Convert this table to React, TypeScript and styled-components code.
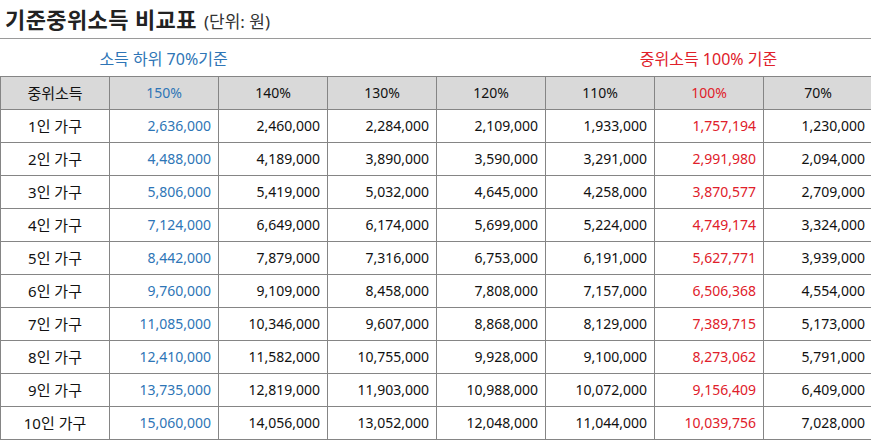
import React from 'react';
import styled, { createGlobalStyle } from 'styled-components';

const GlobalStyle = createGlobalStyle`
  body {
    margin: 0;
    background: #ffffff;
    font-family: 'Noto Sans', 'Noto Sans CJK KR', sans-serif;
    color: #111111;
  }
`;

type Tone = 'blue' | 'red' | 'plain';

const COLS = ['150%', '140%', '130%', '120%', '110%', '100%', '70%'];
const TONES: Tone[] = ['blue', 'plain', 'plain', 'plain', 'plain', 'red', 'plain'];

const ROWS: { label: string; values: string[] }[] = [
  { label: '1인 가구', values: ['2,636,000', '2,460,000', '2,284,000', '2,109,000', '1,933,000', '1,757,194', '1,230,000'] },
  { label: '2인 가구', values: ['4,488,000', '4,189,000', '3,890,000', '3,590,000', '3,291,000', '2,991,980', '2,094,000'] },
  { label: '3인 가구', values: ['5,806,000', '5,419,000', '5,032,000', '4,645,000', '4,258,000', '3,870,577', '2,709,000'] },
  { label: '4인 가구', values: ['7,124,000', '6,649,000', '6,174,000', '5,699,000', '5,224,000', '4,749,174', '3,324,000'] },
  { label: '5인 가구', values: ['8,442,000', '7,879,000', '7,316,000', '6,753,000', '6,191,000', '5,627,771', '3,939,000'] },
  { label: '6인 가구', values: ['9,760,000', '9,109,000', '8,458,000', '7,808,000', '7,157,000', '6,506,368', '4,554,000'] },
  { label: '7인 가구', values: ['11,085,000', '10,346,000', '9,607,000', '8,868,000', '8,129,000', '7,389,715', '5,173,000'] },
  { label: '8인 가구', values: ['12,410,000', '11,582,000', '10,755,000', '9,928,000', '9,100,000', '8,273,062', '5,791,000'] },
  { label: '9인 가구', values: ['13,735,000', '12,819,000', '11,903,000', '10,988,000', '10,072,000', '9,156,409', '6,409,000'] },
  { label: '10인 가구', values: ['15,060,000', '14,056,000', '13,052,000', '12,048,000', '11,044,000', '10,039,756', '7,028,000'] },
];

const toneColor = (tone: Tone): string =>
  tone === 'blue' ? '#2e75b6' : tone === 'red' ? '#e0202a' : '#111111';

const App: React.FC = () => {
  return (
    <Page>
      <GlobalStyle />
      <TitleBar>
        <Title>기준중위소득 비교표</Title>
        <Unit>(단위: 원)</Unit>
      </TitleBar>

      <CaptionRow>
        <Caption $col={2} $tone="blue">소득 하위 70%기준</Caption>
        <Caption $col={7} $tone="red">중위소득 100% 기준</Caption>
      </CaptionRow>

      <Table>
        <colgroup>
          {Array.from({ length: 8 }).map((_, i) => (
            <col key={i} />
          ))}
        </colgroup>
        <thead>
          <tr>
            <HeadCell $tone="plain" $korean>
              중위소득
            </HeadCell>
            {COLS.map((c, i) => (
              <HeadCell key={c} $tone={TONES[i]}>
                {c}
              </HeadCell>
            ))}
          </tr>
        </thead>
        <tbody>
          {ROWS.map((row) => (
            <tr key={row.label}>
              <LabelCell>{row.label}</LabelCell>
              {row.values.map((v, i) => (
                <ValueCell key={i} $tone={TONES[i]}>
                  {v}
                </ValueCell>
              ))}
            </tr>
          ))}
        </tbody>
      </Table>
    </Page>
  );
};

export default App;

const Page = styled.div`
  width: 871px;
  height: 442px;
  overflow: hidden;
`;

const TitleBar = styled.div`
  display: flex;
  align-items: baseline;
  gap: 7px;
  height: 39px;
  padding-left: 5px;
  border-bottom: 1px solid #9a9a9a;
  box-sizing: border-box;
  line-height: 38px;
`;

const Title = styled.h1`
  margin: 0;
  font-size: 22px;
  font-weight: 700;
  color: #222222;
  letter-spacing: 0.4px;
`;

const Unit = styled.span`
  font-size: 17px;
  color: #333333;
`;

const CaptionRow = styled.div`
  display: grid;
  grid-template-columns: repeat(8, 109px);
  height: 37px;
  align-items: center;
`;

const Caption = styled.div<{ $col: number; $tone: Tone }>`
  grid-column: ${(p) => p.$col};
  justify-self: center;
  white-space: nowrap;
  font-size: 16px;
  color: ${(p) => toneColor(p.$tone)};
`;

const Table = styled.table`
  border-collapse: collapse;
  table-layout: fixed;
  width: 873px;
  font-size: 14px;

  col {
    width: 109px;
  }

  td,
  th {
    border: 1px solid #858585;
    height: 33px;
    padding: 0 7px;
    box-sizing: border-box;
    white-space: nowrap;
    line-height: 20px;
  }
`;

const HeadCell = styled.th<{ $tone: Tone; $korean?: boolean }>`
  background: #d9d9d9;
  font-weight: 400;
  text-align: center;
  font-size: ${(p) => (p.$korean ? '15px' : '14px')};
  color: ${(p) => toneColor(p.$tone)};
`;

const LabelCell = styled.td`
  text-align: center;
  font-size: 15px;
`;

const ValueCell = styled.td<{ $tone: Tone }>`
  text-align: right;
  color: ${(p) => toneColor(p.$tone)};
`;
